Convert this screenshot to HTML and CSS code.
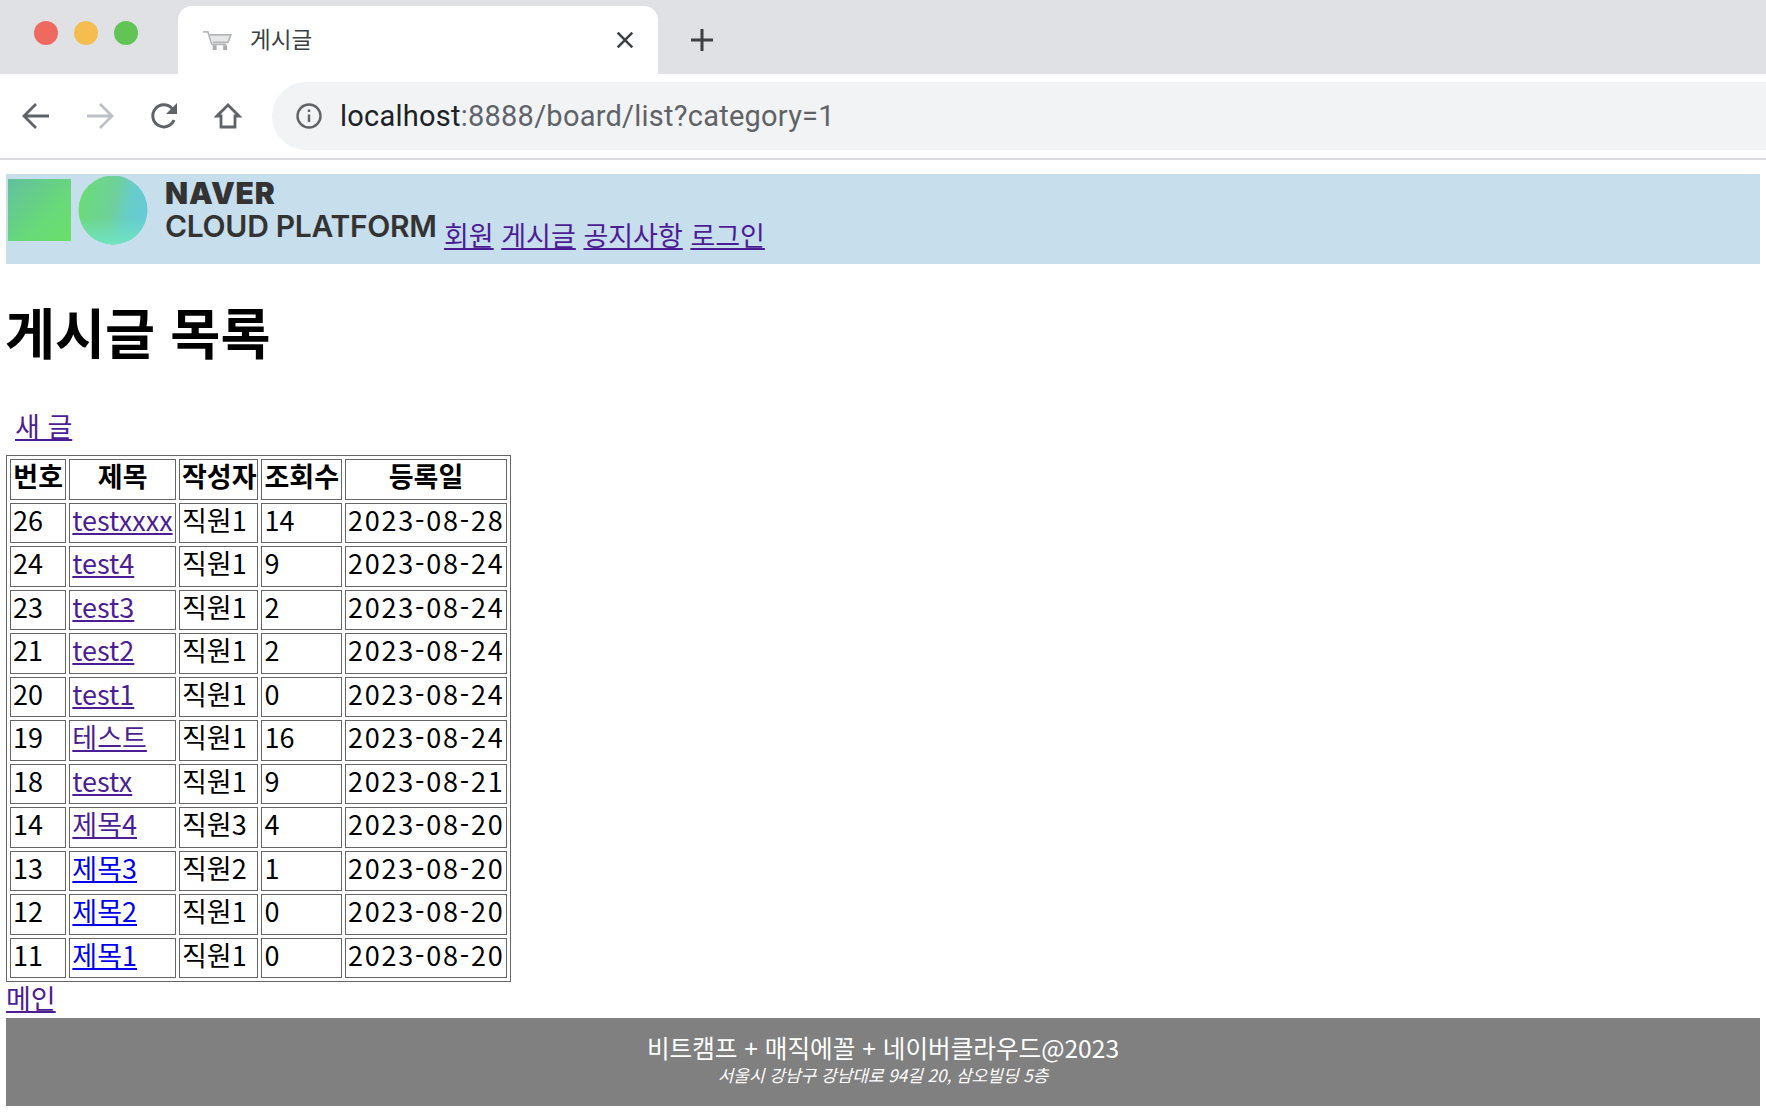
FILE: index.html
```html
<!DOCTYPE html>
<html lang="ko">
<head>
<meta charset="utf-8">
<title>게시글</title>
<link rel="stylesheet" href="styles.css">
</head>
<body>
<div class="browser">
  <div class="tabstrip">
    <div class="lights"><span class="light red"></span><span class="light yellow"></span><span class="light green"></span></div>
    <div class="tab">
      <svg class="favicon" viewBox="0 0 32 22" fill="none" stroke="#b4b6b8" stroke-width="1.800"><path d="M1 2h5l4 13h15"/><path d="M8 5h22l-3 8H11" fill="#e6e7e8"/><rect x="11" y="16" width="4" height="5" fill="#a9abad" stroke="none"/><rect x="22" y="16" width="4" height="5" fill="#a9abad" stroke="none"/></svg>
      <span class="tab-title">게시글</span>
      <svg class="tab-close" viewBox="0 0 16 16" fill="none" stroke="#3c4043" stroke-width="2.200"><path d="M1.500 1.500l13 13M14.500 1.500l-13 13"/></svg>
    </div>
    <svg class="newtab" viewBox="0 0 24 24" fill="none" stroke="#3c4043" stroke-width="3"><path d="M12 1v22M1 12h22"/></svg>
  </div>
  <div class="toolbar">
    <div class="navicons">
      <svg class="nav" viewBox="0 0 28 28" fill="none" stroke="#5f6368" stroke-width="2.800"><path d="M27 14H3M14 2L2 14l12 12"/></svg>
      <svg class="nav" viewBox="0 0 28 28" fill="none" stroke="#bdc1c6" stroke-width="2.800"><path d="M1 14h24M14 2l12 12-12 12"/></svg>
      <svg class="nav" viewBox="0 0 28 28" fill="none" stroke="#5f6368" stroke-width="3"><path d="M24 18a11 11 0 1 1-2-11.500"/><path d="M27 1v11H16z" fill="#5f6368" stroke="none"/></svg>
      <svg class="nav" viewBox="0 0 28 28" fill="none" stroke="#5f6368" stroke-width="2.800"><path d="M14 3L3 14h4v11h14V14h4z" stroke-linejoin="miter"/></svg>
    </div>
    <div class="address">
      <svg class="info" viewBox="0 0 26 26" fill="none" stroke="#5f6368" stroke-width="2.400"><circle cx="13" cy="13" r="11.500"/><path d="M13 11.500v7.500M13 6.500v2.500"/></svg>
      <span class="url"><span class="host">localhost</span>:8888/board/list?category=1</span>
    </div>
  </div>
</div>

<div class="page">
  <header class="site-header">
    <div class="logo">
      <svg class="logo-mark" viewBox="0 0 142 70">
        <defs>
          <linearGradient id="sq" x1="0" y1="0" x2="1" y2="1"><stop offset="0" stop-color="#63bf9f"/><stop offset="0.600" stop-color="#68d97a"/><stop offset="1" stop-color="#69e06a"/></linearGradient>
          <linearGradient id="ci" x1="0" y1="0.300" x2="1" y2="0.500"><stop offset="0" stop-color="#6bdc78"/><stop offset="0.500" stop-color="#6ed09a"/><stop offset="0.750" stop-color="#68cccb"/><stop offset="1" stop-color="#66cbd5"/></linearGradient>
          <linearGradient id="cb" x1="0" y1="0" x2="0" y2="1"><stop offset="0.600" stop-color="#70e4c0" stop-opacity="0"/><stop offset="1" stop-color="#70e4c0"/></linearGradient>
        </defs>
        <rect x="2" y="3" width="63" height="62" fill="url(#sq)"/>
        <circle cx="107" cy="34" r="34.500" fill="url(#ci)"/>
        <circle cx="107" cy="34" r="34.500" fill="url(#cb)"/>
      </svg>
      <div class="logo-text"><span class="logo-naver">NAVER</span><span class="logo-cloud">CLOUD PLATFORM</span></div>
    </div>
    <nav class="site-nav">
      <a class="visited" href="#">회원</a>
      <a class="visited" href="#">게시글</a>
      <a class="visited" href="#">공지사항</a>
      <a class="visited" href="#">로그인</a>
    </nav>
  </header>

  <h1 class="title">게시글 목록</h1>
  <div class="new-post"><a class="visited" href="#">새 글</a></div>

  <table class="board">
    <colgroup><col class="c-no"><col class="c-title"><col class="c-writer"><col class="c-views"><col class="c-date"></colgroup>
    <thead>
      <tr><th>번호</th><th>제목</th><th>작성자</th><th>조회수</th><th>등록일</th></tr>
    </thead>
    <tbody>
      <tr><td>26</td><td><a class="visited" href="#">testxxxx</a></td><td>직원1</td><td>14</td><td class="date">2023-08-28</td></tr>
      <tr><td>24</td><td><a class="visited" href="#">test4</a></td><td>직원1</td><td>9</td><td class="date">2023-08-24</td></tr>
      <tr><td>23</td><td><a class="visited" href="#">test3</a></td><td>직원1</td><td>2</td><td class="date">2023-08-24</td></tr>
      <tr><td>21</td><td><a class="visited" href="#">test2</a></td><td>직원1</td><td>2</td><td class="date">2023-08-24</td></tr>
      <tr><td>20</td><td><a class="visited" href="#">test1</a></td><td>직원1</td><td>0</td><td class="date">2023-08-24</td></tr>
      <tr><td>19</td><td><a class="visited" href="#">테스트</a></td><td>직원1</td><td>16</td><td class="date">2023-08-24</td></tr>
      <tr><td>18</td><td><a class="visited" href="#">testx</a></td><td>직원1</td><td>9</td><td class="date">2023-08-21</td></tr>
      <tr><td>14</td><td><a class="visited" href="#">제목4</a></td><td>직원3</td><td>4</td><td class="date">2023-08-20</td></tr>
      <tr><td>13</td><td><a class="fresh" href="#">제목3</a></td><td>직원2</td><td>1</td><td class="date">2023-08-20</td></tr>
      <tr><td>12</td><td><a class="fresh" href="#">제목2</a></td><td>직원1</td><td>0</td><td class="date">2023-08-20</td></tr>
      <tr><td>11</td><td><a class="fresh" href="#">제목1</a></td><td>직원1</td><td>0</td><td class="date">2023-08-20</td></tr>
    </tbody>
  </table>

  <div class="main-link"><a class="visited" href="#">메인</a></div>

  <footer class="site-footer">
    <div class="foot-main">비트캠프 + 매직에꼴 + 네이버클라우드@2023</div>
    <address class="foot-addr">서울시 강남구 강남대로 94길 20, 삼오빌딩 5층</address>
  </footer>
</div>
</body>
</html>
```

FILE: styles.css
```css
* { box-sizing: border-box; }
html, body { margin: 0; padding: 0; background: #fff; }
body {
  height: 1118px;
  overflow: hidden;
  font-family: "Noto Sans CJK KR", "Noto Sans", sans-serif;
  font-size: 27px;
  color: #000;
}

/* browser chrome */
.tabstrip {
  height: 74px;
  background: #dfe1e5;
  display: flex;
  align-items: flex-end;
}
.lights { width: 178px; height: 74px; display: flex; gap: 16px; padding: 21px 0 0 34px; }
.light { width: 24px; height: 24px; border-radius: 50%; }
.red { background: #ee6a5f; }
.yellow { background: #f5bd4f; }
.green { background: #61c454; }
.tab {
  width: 480px;
  height: 68px;
  background: #fff;
  border-radius: 14px 14px 0 0;
  display: flex;
  align-items: center;
  padding: 0 24px 0 24px;
}
.favicon { width: 31px; height: 21px; margin-right: 17px; }
.tab-title { font-size: 22.500px; color: #3c4043; line-height: 1; flex: 1; margin-bottom: 4px; }
.tab-close { width: 18px; height: 18px; }
.newtab { width: 24px; height: 24px; margin: 0 0 22px 32px; }

.toolbar {
  height: 86px;
  background: #fff;
  border-bottom: 2px solid #dadce0;
  display: flex;
  padding-top: 8px;
}
.navicons { width: 272px; height: 68px; display: flex; align-items: center; gap: 36px; padding-left: 22px; }
.nav { width: 28px; height: 28px; }
.address {
  flex: 1;
  height: 68px;
  background: #f1f3f4;
  border-radius: 34px 0 0 34px;
  display: flex;
  align-items: center;
  padding-left: 24px;
}
.info { width: 26px; height: 26px; margin-right: 18px; }
.url { font-family: Roboto, "Liberation Sans", sans-serif; font-size: 29px; letter-spacing: 0.240px; color: #5f6368; white-space: nowrap; }
.host { color: #202124; }

/* page */
.page { padding: 14px 6px 0; }
a { text-decoration: underline; }
a.visited { color: #4c1d95; }
a.fresh { color: #0000ee; }

.site-header {
  height: 90px;
  background: #c7deed;
  display: flex;
  align-items: flex-start;
}
.logo { width: 431px; height: 90px; display: flex; padding-top: 2px; }
.logo-mark { width: 142px; height: 70px; margin-right: 17px; flex: none; }
.logo-text { display: flex; flex-direction: column; color: #333; font-family: Inter, "Liberation Sans", sans-serif; white-space: nowrap; line-height: 1; }
.logo-naver { font-size: 30px; font-weight: 900; margin-top: 2px; letter-spacing: 0.800px; }
.logo-cloud { font-size: 30px; font-weight: 600; margin-top: 3px; letter-spacing: -0.300px; }
.site-nav { display: flex; gap: 7.600px; padding: 42px 0 0 7px; line-height: 38px; white-space: nowrap; }

.title { font-size: 54.400px; font-weight: 700; line-height: 77px; margin: 28px 0 0 -1px; }
.new-post { margin-top: 38px; padding-left: 9px; line-height: 38px; height: 48px; }

.board {
  table-layout: fixed;
  width: 505px;
  border-collapse: separate;
  border-spacing: 3.300px;
  border: 1px solid #666;
}
.c-no { width: 56px; }
.c-title { width: 106px; }
.c-writer { width: 79px; }
.c-views { width: 80px; }
.c-date { width: 161px; }
.board th, .board td {
  border: 1px solid #666;
  height: 40.500px;
  padding: 0 2px 6px;
  line-height: 30px;
  white-space: nowrap;
}
.board th { font-weight: 700; text-align: center; }
.date { letter-spacing: 1.800px; }

.main-link { line-height: 32px; height: 36px; }

.site-footer {
  height: 88px;
  background: #808080;
  color: #fff;
  text-align: center;
  padding-top: 13px;
}
.foot-main { font-size: 24.600px; line-height: 33px; }
.foot-addr { font-size: 17px; line-height: 21px; font-style: italic; }
```
